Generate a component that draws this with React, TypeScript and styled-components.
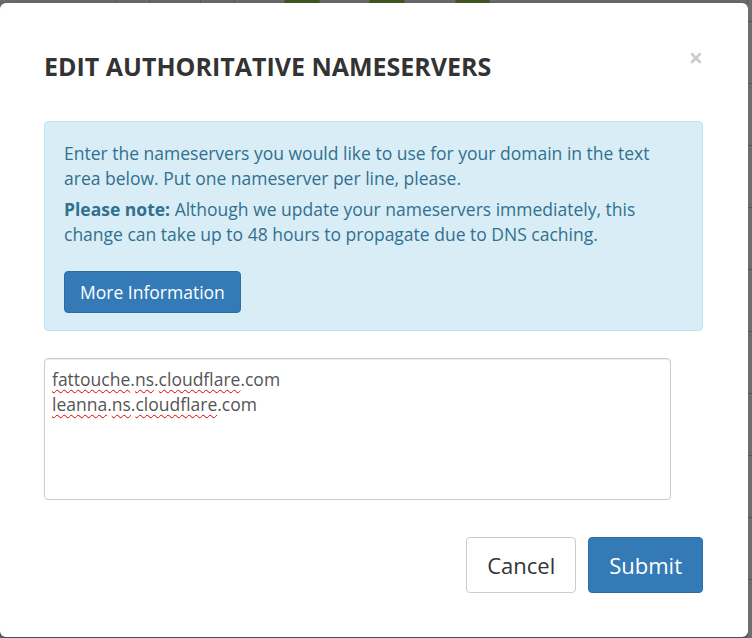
import React from 'react';
import styled, { createGlobalStyle } from 'styled-components';

const GlobalStyle = createGlobalStyle`
    html, body {
        margin: 0;
        padding: 0;
        background: #6c6c6c;
        font-family: "Open Sans", "Liberation Sans", sans-serif;
        overflow: hidden;
    }
`;

const Page = styled.div`
    display: flex;
    width: 752px;
    height: 638px;
    background: #6c6c6c;
`;

const MainColumn = styled.div`
    display: flex;
    flex-direction: column;
    width: 748px;
`;

const TopStrip = styled.div`
    display: flex;
    height: 3px;
`;

const StripCell = styled.div<{ $w: number; $green?: boolean }>`
    width: ${p => p.$w}px;
    flex-shrink: 0;
    background: ${p => (p.$green ? '#435a24' : '#6e6e6e')};
    border-right: 1px solid #5a5a5a;
    box-sizing: border-box;
`;

const RightStrip = styled.div`
    flex: 1;
    background: repeating-linear-gradient(
        to bottom,
        #6e6e6e 0px,
        #6e6e6e 21px,
        #555 21px,
        #555 22px,
        #6e6e6e 22px,
        #6e6e6e 62px
    );
`;

const Modal = styled.div`
    box-sizing: border-box;
    height: 634px;
    background: #fff;
    border-radius: 6px;
    padding: 0 45px 0 44px;
    display: flex;
    flex-direction: column;
    box-shadow: 0 3px 9px rgba(0, 0, 0, 0.4);
`;

const Header = styled.div`
    display: flex;
    justify-content: space-between;
    align-items: flex-start;
    padding-top: 48px;
    margin-bottom: 40px;
`;

const Title = styled.h4`
    margin: 0;
    font-size: 25px;
    line-height: 30px;
    font-weight: 700;
    color: #333;
`;

const CloseButton = styled.button`
    border: 0;
    background: none;
    padding: 0;
    margin-top: -6px;
    margin-right: 0;
    font-family: "Open Sans", "Liberation Sans", sans-serif;
    font-size: 25px;
    font-weight: 700;
    line-height: 1;
    color: #000;
    opacity: 0.2;
    cursor: pointer;
`;

const Alert = styled.div`
    background: #d9edf7;
    border: 1px solid #bce8f1;
    border-radius: 4px;
    padding: 19px 19px 17px;
    color: #31708f;
    font-size: 17.5px;
    line-height: 25px;
`;

const AlertText = styled.p`
    margin: 0 0 6px;

    strong {
        font-weight: 700;
    }
`;

const Button = styled.button<{ $variant?: 'primary' | 'default'; $size?: 'md' | 'lg' }>`
    box-sizing: border-box;
    font-family: "Open Sans", "Liberation Sans", sans-serif;
    font-size: ${p => (p.$size === 'lg' ? '22px' : '17.5px')};
    line-height: ${p => (p.$size === 'lg' ? '28px' : '24px')};
    padding: ${p => (p.$size === 'lg' ? '13px 20px' : '8px 15px')};
    border-radius: 4px;
    border: 1px solid ${p => (p.$variant === 'primary' ? '#2e6da4' : '#ccc')};
    background: ${p => (p.$variant === 'primary' ? '#337ab7' : '#fff')};
    color: ${p => (p.$variant === 'primary' ? '#fff' : '#333')};
    cursor: pointer;
`;

const InfoButton = styled(Button)`
    margin-top: 18px;
`;

const Editor = styled.div`
    box-sizing: border-box;
    margin-top: 27px;
    width: 627px;
    height: 142px;
    border: 1px solid #ccc;
    border-radius: 4px;
    padding: 8px 7px;
    font-size: 17.5px;
    line-height: 25px;
    color: #555;
    box-shadow: inset 0 1px 1px rgba(0, 0, 0, 0.075);
`;

const Misspelled = styled.span`
    text-decoration: underline wavy #e00000;
    text-decoration-thickness: 1px;
    text-underline-offset: 3px;
    text-decoration-skip-ink: none;
`;

const Footer = styled.div`
    display: flex;
    justify-content: flex-end;
    gap: 12px;
    margin-top: 37px;
`;

const strip = [
    { w: 116 }, { w: 34 }, { w: 51 }, { w: 34 }, { w: 50 },
    { w: 35, green: true }, { w: 50 }, { w: 35, green: true }, { w: 51 },
    { w: 34, green: true }, { w: 258 },
];

const Host: React.FC<{ parts: string[] }> = ({ parts }) => (
    <div>
        {parts.map((p, i) => (
            <React.Fragment key={i}>
                {i > 0 && '.'}
                {i < parts.length - 1 ? <Misspelled>{p}</Misspelled> : p}
            </React.Fragment>
        ))}
    </div>
);

const App: React.FC = () => {
    return (
        <Page>
            <GlobalStyle />
            <MainColumn>
                <TopStrip>
                    {strip.map((s, i) => <StripCell key={i} $w={s.w} $green={s.green} />)}
                </TopStrip>
                <Modal>
                    <Header>
                        <Title>EDIT AUTHORITATIVE NAMESERVERS</Title>
                        <CloseButton aria-label="Close">×</CloseButton>
                    </Header>
                    <Alert>
                        <AlertText>Enter the nameservers you would like to use for your domain in the text area below. Put one nameserver per line, please.</AlertText>
                        <AlertText><strong>Please note:</strong> Although we update your nameservers immediately, this change can take up to 48 hours to propagate due to DNS caching.</AlertText>
                        <InfoButton $variant="primary">More Information</InfoButton>
                    </Alert>
                    <Editor role="textbox">
                        <Host parts={['fattouche', 'ns', 'cloudflare', 'com']} />
                        <Host parts={['leanna', 'ns', 'cloudflare', 'com']} />
                    </Editor>
                    <Footer>
                        <Button $size="lg">Cancel</Button>
                        <Button $size="lg" $variant="primary">Submit</Button>
                    </Footer>
                </Modal>
            </MainColumn>
            <RightStrip />
        </Page>
    );
};

export default App;
